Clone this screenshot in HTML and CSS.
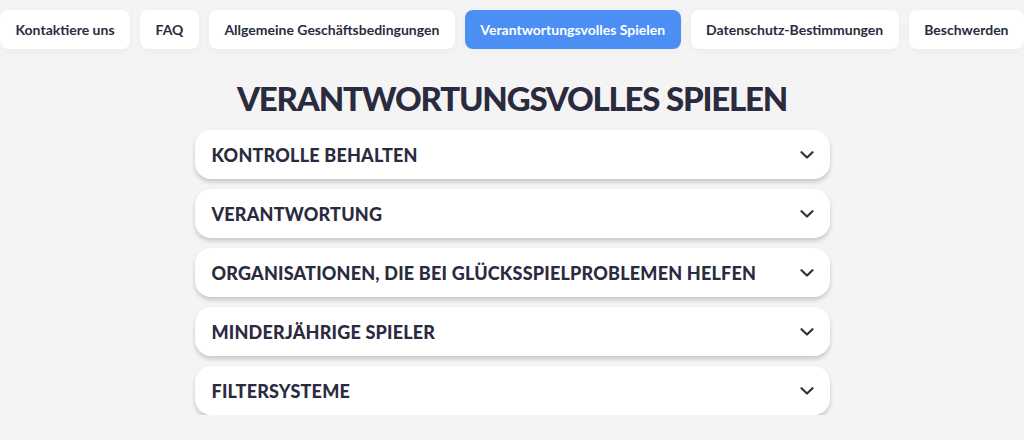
FILE: index.html
```html
<!DOCTYPE html>
<html lang="de">
    <head>
        <meta charset="UTF-8">
        <title>Verantwortungsvolles Spielen</title>
        <link rel="stylesheet" href="styles.css">
    </head>
    <body>
        <nav class="tabs">
            <a class="tab" href="#">Kontaktiere uns</a>
            <a class="tab" href="#">FAQ</a>
            <a class="tab" href="#">Allgemeine Geschäftsbedingungen</a>
            <a class="tab active" href="#">Verantwortungsvolles Spielen</a>
            <a class="tab" href="#">Datenschutz-Bestimmungen</a>
            <a class="tab" href="#">Beschwerden</a>
        </nav>
        <main>
            <h1>Verantwortungsvolles Spielen</h1>
            <ul class="accordion">
                <li class="item">
                    <span>Kontrolle behalten</span>
                    <svg class="chevron" viewBox="0 0 14 8"><path d="M1.5 1.2 7 6.5l5.5-5.3"/></svg>
                </li>
                <li class="item">
                    <span>Verantwortung</span>
                    <svg class="chevron" viewBox="0 0 14 8"><path d="M1.5 1.2 7 6.5l5.5-5.3"/></svg>
                </li>
                <li class="item">
                    <span>Organisationen, die bei Glücksspielproblemen helfen</span>
                    <svg class="chevron" viewBox="0 0 14 8"><path d="M1.5 1.2 7 6.5l5.5-5.3"/></svg>
                </li>
                <li class="item">
                    <span>Minderjährige Spieler</span>
                    <svg class="chevron" viewBox="0 0 14 8"><path d="M1.5 1.2 7 6.5l5.5-5.3"/></svg>
                </li>
                <li class="item">
                    <span>Filtersysteme</span>
                    <svg class="chevron" viewBox="0 0 14 8"><path d="M1.5 1.2 7 6.5l5.5-5.3"/></svg>
                </li>
            </ul>
        </main>
    </body>
</html>
```

FILE: styles.css
```css
:root {
    --page-background-color: #f4f4f4;
    --card-background-color: #fff;
    --text-color: #2b2b40;
    --active-color: #4b8ff5;
    --gap: 10px;
}

body {
    margin: 0;
    background-color: var(--page-background-color);
    font-family: Lato, "Noto Sans", sans-serif;
    color: var(--text-color);
}

.tabs {
    display: flex;
    justify-content: center;
    gap: var(--gap);
    padding-top: 10px;
}

.tab {
    display: block;
    height: 39px;
    line-height: 39px;
    padding: 0 15.5px;
    border-radius: 8px;
    background-color: var(--card-background-color);
    box-shadow: 0 2px 6px rgba(0, 0, 0, 0.04);
    color: var(--text-color);
    font-size: 14px;
    font-weight: 700;
    text-decoration: none;
    white-space: nowrap;
}

.tab.active {
    background-color: var(--active-color);
    color: #fff;
}

main {
    width: 635px;
    margin: 0 auto;
}

h1 {
    margin: 29px 0 12px;
    text-align: center;
    text-transform: uppercase;
    font-size: 33px;
    font-weight: 900;
    letter-spacing: -1.2px;
    line-height: 40px;
}

.accordion {
    list-style: none;
    margin: 0;
    padding: 0;
    display: flex;
    flex-direction: column;
    gap: var(--gap);
}

.item {
    display: flex;
    align-items: center;
    justify-content: space-between;
    height: 49px;
    padding: 0 16px 0 17px;
    border-radius: 16px;
    background-color: var(--card-background-color);
    box-shadow: 0 3px 4px rgba(0, 0, 0, 0.18);
    text-transform: uppercase;
    font-size: 18px;
    font-weight: 900;
    letter-spacing: 0.2px;
}

.chevron {
    width: 14px;
    height: 8px;
    fill: none;
    stroke: #333;
    stroke-width: 2.2;
    stroke-linecap: round;
    stroke-linejoin: round;
}
```
